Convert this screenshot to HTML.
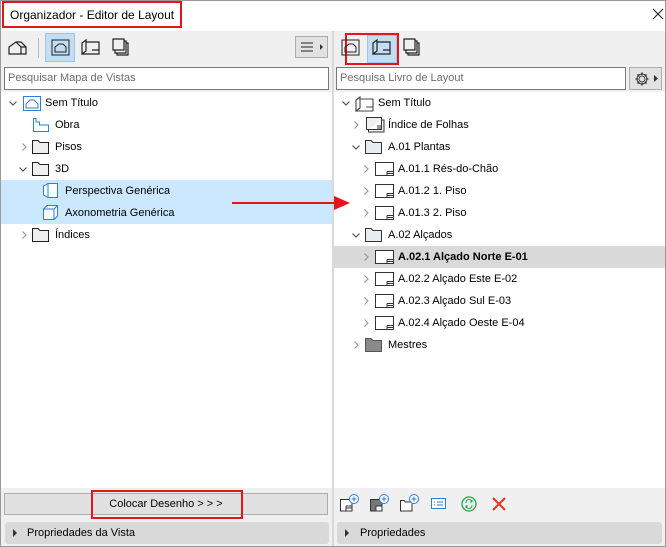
<!DOCTYPE html>
<html><head><meta charset="utf-8"><style>
*{box-sizing:border-box;margin:0;padding:0}
body{width:666px;height:547px;position:relative;overflow:hidden;background:#fff;font-family:"Liberation Sans",sans-serif;font-size:11px;color:#000}
.a{position:absolute}
.row{position:absolute;height:22px;line-height:22px;white-space:nowrap}
.gray{background:#f0f0f0}
svg{position:absolute;overflow:visible}
</style></head><body>
<div class="a" style="left:0;top:0;width:666px;height:547px;border:1px solid #9a9a9a"></div>
<div class="a" style="left:10px;top:8px;font-size:12px">Organizador - Editor de Layout</div>
<div class="a" style="left:2px;top:1px;width:180px;height:27px;border:2px solid #e8141c"></div>
<svg style="left:653px;top:9px" width="10" height="10"><path d="M0 0L10 10M10 0L0 10" stroke="#222" stroke-width="1.1"/></svg>

<!-- toolbars -->
<div class="a gray" style="left:1px;top:31px;width:331px;height:61px"></div>
<div class="a gray" style="left:334px;top:31px;width:331px;height:61px"></div>
<div class="a" style="left:332px;top:31px;width:2px;height:515px;background:#d8d8d8"></div>
<div class="a" style="left:45px;top:33px;width:30px;height:29px;background:#c3ddf2;border:1px solid #9ec6e8"></div>
<div class="a" style="left:38px;top:38px;width:1px;height:20px;background:#bbb"></div>
<svg style="left:8px;top:40px" width="20" height="16"><path d="M1 14V7L8 2H13L18 7V14H1ZM8 2L13 7V14M13 7H18" fill="none" stroke="#222" stroke-width="1.2"/></svg>
<svg style="left:51px;top:39px" width="20" height="18"><rect x="1" y="1" width="17" height="15" fill="none" stroke="#222"/><path d="M4 13V8L8 5H12L15 8V13Z" fill="none" stroke="#222"/></svg>
<svg style="left:81px;top:39px" width="20" height="18"><path d="M1 15V4L5 1V12ZM5 3H18V15H1M11 11H18" fill="none" stroke="#222" stroke-width="1.2"/></svg>
<svg style="left:112px;top:38px" width="18" height="18"><path d="M1 1H12V12H1ZM3 12V15H14V3H12M5 15V17H16V5H14" fill="none" stroke="#222" stroke-width="1.2"/></svg>
<div class="a" style="left:295px;top:36px;width:33px;height:22px;background:#e2e2e2;border:1px solid #adadad"></div>
<svg style="left:301px;top:42px" width="22" height="10"><path d="M0 1H12M0 5H12M0 9H12" stroke="#222"/><path d="M19 2L22 5L19 8Z" fill="#333"/></svg>

<div class="a" style="left:345px;top:33px;width:54px;height:32px;border:2px solid #e8141c"></div>
<div class="a" style="left:367px;top:35px;width:30px;height:28px;background:#c3ddf2;border:1px solid #9ec6e8"></div>
<svg style="left:341px;top:39px" width="20" height="18"><rect x="1" y="1" width="17" height="15" fill="none" stroke="#222"/><path d="M4 13V8L8 5H12L15 8V13Z" fill="none" stroke="#222"/></svg>
<svg style="left:372px;top:39px" width="20" height="18"><path d="M1 15V4L5 1V12ZM5 3H18V15H1M11 11H18" fill="none" stroke="#222" stroke-width="1.2"/></svg>
<svg style="left:403px;top:38px" width="18" height="18"><path d="M1 1H12V12H1ZM3 12V15H14V3H12M5 15V17H16V5H14" fill="none" stroke="#222" stroke-width="1.2"/></svg>

<!-- search -->
<div class="a" style="left:4px;top:67px;width:325px;height:23px;border:1px solid #7a7a7a;background:#fff;color:#6d6d6d;padding-left:3px;line-height:21px">Pesquisar Mapa de Vistas</div>
<div class="a" style="left:336px;top:67px;width:290px;height:23px;border:1px solid #7a7a7a;background:#fff;color:#6d6d6d;padding-left:3px;line-height:21px">Pesquisa Livro de Layout</div>
<div class="a" style="left:629px;top:67px;width:33px;height:23px;border:1px solid #adadad;background:#e2e2e2"></div>
<svg style="left:634px;top:71px" width="16" height="16"><circle cx="8" cy="8" r="3" fill="none" stroke="#444"/><path d="M8 1.5V4M8 12V14.5M1.5 8H4M12 8H14.5M3.4 3.4L5.2 5.2M10.8 10.8L12.6 12.6M3.4 12.6L5.2 10.8M10.8 5.2L12.6 3.4" stroke="#444" stroke-width="1.6"/><circle cx="8" cy="8" r="5" fill="none" stroke="#444"/></svg>
<svg style="left:654px;top:75px" width="4" height="7"><path d="M0 0L4 3.5L0 7Z" fill="#333"/></svg>

<!-- left tree -->
<div class="a" style="left:1px;top:180px;width:331px;height:44px;background:#cce8ff"></div>
<svg style="left:9px;top:101px" width="8" height="5"><path d="M.5 .5L4 4L7.5 .5" fill="none" stroke="#555" stroke-width="1.2"/></svg>
<svg style="left:23px;top:96px" width="18" height="15"><rect x="0.5" y="0.5" width="17" height="14" fill="none" stroke="#2a7de1"/><path d="M3 12V8L7 4H11L15 8V12Z" fill="none" stroke="#2a7de1"/></svg>
<div class="row" style="left:45px;top:92px">Sem Título</div>
<svg style="left:33px;top:118px" width="16" height="14"><path d="M.5 .5H3V4H6.5V7H15.5V13.5H.5Z" fill="#fff" stroke="#2a7de1"/></svg>
<div class="row" style="left:55px;top:114px">Obra</div>
<svg style="left:22px;top:143px" width="5" height="8"><path d="M.5 .5L4 4L.5 7.5" fill="none" stroke="#999" stroke-width="1.2"/></svg>
<svg style="left:32px;top:140px" width="17" height="14"><path d="M.5 13.5V.5H6L8 2.5H16.5V13.5Z" fill="#f0f0f0" stroke="#222"/></svg>
<div class="row" style="left:55px;top:136px">Pisos</div>
<svg style="left:19px;top:167px" width="8" height="5"><path d="M.5 .5L4 4L7.5 .5" fill="none" stroke="#555" stroke-width="1.2"/></svg>
<svg style="left:32px;top:162px" width="17" height="14"><path d="M.5 13.5V.5H6L8 2.5H16.5V13.5Z" fill="#f0f0f0" stroke="#222"/></svg>
<div class="row" style="left:55px;top:158px">3D</div>
<svg style="left:43px;top:183px" width="16" height="16"><path d="M.5 3L5 .5H14.5V14.5H5L.5 12ZM5 .5V14.5" fill="#fff" stroke="#2a7de1"/></svg>
<div class="row" style="left:65px;top:180px">Perspectiva Genérica</div>
<svg style="left:43px;top:205px" width="16" height="16"><path d="M.5 4L4 .5H14.5V11L11 14.5H.5ZM.5 4H11V14.5M11 4L14.5 .5" fill="#fff" stroke="#2a7de1"/></svg>
<div class="row" style="left:65px;top:202px">Axonometria Genérica</div>
<svg style="left:22px;top:231px" width="5" height="8"><path d="M.5 .5L4 4L.5 7.5" fill="none" stroke="#999" stroke-width="1.2"/></svg>
<svg style="left:32px;top:228px" width="17" height="14"><path d="M.5 13.5V.5H6L8 2.5H16.5V13.5Z" fill="#f0f0f0" stroke="#222"/></svg>
<div class="row" style="left:55px;top:224px">Índices</div>

<!-- arrow -->
<div class="a" style="left:232px;top:202px;width:106px;height:2px;background:#e8141c"></div>
<svg style="left:334px;top:196px" width="16" height="14"><path d="M0 0L16 7L0 14Z" fill="#e8141c"/></svg>

<!-- right tree -->
<div class="a" style="left:334px;top:246px;width:331px;height:22px;background:#d9d9d9"></div>
<svg style="left:342px;top:101px" width="8" height="5"><path d="M.5 .5L4 4L7.5 .5" fill="none" stroke="#555" stroke-width="1.2"/></svg>
<svg style="left:355px;top:96px" width="20" height="16"><path d="M1 15V4L5 1V12ZM5 3H18V15H1M11 11H18" fill="none" stroke="#444" stroke-width="1.1"/></svg>
<div class="row" style="left:378px;top:92px">Sem Título</div>
<svg style="left:354px;top:121px" width="5" height="8"><path d="M.5 .5L4 4L.5 7.5" fill="none" stroke="#999" stroke-width="1.2"/></svg>
<svg style="left:366px;top:117px" width="19" height="16"><path d="M.5 .5H15.5V12.5H.5ZM2.5 12.5V15H18V3H15.5M11 9H15.5M11 11H15.5" fill="#f0f0f0" stroke="#333"/></svg>
<div class="row" style="left:388px;top:114px">Índice de Folhas</div>
<svg style="left:352px;top:145px" width="8" height="5"><path d="M.5 .5L4 4L7.5 .5" fill="none" stroke="#555" stroke-width="1.2"/></svg>
<svg style="left:365px;top:140px" width="17" height="14"><path d="M.5 13.5V.5H6L8 2.5H16.5V13.5Z" fill="#e8edf3" stroke="#333"/></svg>
<div class="row" style="left:388px;top:136px">A.01 Plantas</div>
<svg style="left:364px;top:165px" width="5" height="8"><path d="M.5 .5L4 4L.5 7.5" fill="none" stroke="#999" stroke-width="1.2"/></svg>
<svg style="left:375px;top:162px" width="19" height="14"><path d="M.5 .5H18.5V13.5H.5ZM12 9.5H18.5M12 11.5H18.5M12 9.5V13.5" fill="#fff" stroke="#333"/></svg>
<div class="row" style="left:398px;top:158px">A.01.1 Rés-do-Chão</div>
<svg style="left:364px;top:187px" width="5" height="8"><path d="M.5 .5L4 4L.5 7.5" fill="none" stroke="#999" stroke-width="1.2"/></svg>
<svg style="left:375px;top:184px" width="19" height="14"><path d="M.5 .5H18.5V13.5H.5ZM12 9.5H18.5M12 11.5H18.5M12 9.5V13.5" fill="#fff" stroke="#333"/></svg>
<div class="row" style="left:398px;top:180px">A.01.2 1. Piso</div>
<svg style="left:364px;top:209px" width="5" height="8"><path d="M.5 .5L4 4L.5 7.5" fill="none" stroke="#999" stroke-width="1.2"/></svg>
<svg style="left:375px;top:206px" width="19" height="14"><path d="M.5 .5H18.5V13.5H.5ZM12 9.5H18.5M12 11.5H18.5M12 9.5V13.5" fill="#fff" stroke="#333"/></svg>
<div class="row" style="left:398px;top:202px">A.01.3 2. Piso</div>
<svg style="left:352px;top:233px" width="8" height="5"><path d="M.5 .5L4 4L7.5 .5" fill="none" stroke="#555" stroke-width="1.2"/></svg>
<svg style="left:365px;top:228px" width="17" height="14"><path d="M.5 13.5V.5H6L8 2.5H16.5V13.5Z" fill="#e8edf3" stroke="#333"/></svg>
<div class="row" style="left:388px;top:224px">A.02 Alçados</div>
<svg style="left:364px;top:253px" width="5" height="8"><path d="M.5 .5L4 4L.5 7.5" fill="none" stroke="#999" stroke-width="1.2"/></svg>
<svg style="left:375px;top:250px" width="19" height="14"><path d="M.5 .5H18.5V13.5H.5ZM12 9.5H18.5M12 11.5H18.5M12 9.5V13.5" fill="#fff" stroke="#333"/></svg>
<div class="row" style="left:398px;top:246px;font-weight:bold">A.02.1 Alçado Norte E-01</div>
<svg style="left:364px;top:275px" width="5" height="8"><path d="M.5 .5L4 4L.5 7.5" fill="none" stroke="#999" stroke-width="1.2"/></svg>
<svg style="left:375px;top:272px" width="19" height="14"><path d="M.5 .5H18.5V13.5H.5ZM12 9.5H18.5M12 11.5H18.5M12 9.5V13.5" fill="#fff" stroke="#333"/></svg>
<div class="row" style="left:398px;top:268px">A.02.2 Alçado Este E-02</div>
<svg style="left:364px;top:297px" width="5" height="8"><path d="M.5 .5L4 4L.5 7.5" fill="none" stroke="#999" stroke-width="1.2"/></svg>
<svg style="left:375px;top:294px" width="19" height="14"><path d="M.5 .5H18.5V13.5H.5ZM12 9.5H18.5M12 11.5H18.5M12 9.5V13.5" fill="#fff" stroke="#333"/></svg>
<div class="row" style="left:398px;top:290px">A.02.3 Alçado Sul E-03</div>
<svg style="left:364px;top:319px" width="5" height="8"><path d="M.5 .5L4 4L.5 7.5" fill="none" stroke="#999" stroke-width="1.2"/></svg>
<svg style="left:375px;top:316px" width="19" height="14"><path d="M.5 .5H18.5V13.5H.5ZM12 9.5H18.5M12 11.5H18.5M12 9.5V13.5" fill="#fff" stroke="#333"/></svg>
<div class="row" style="left:398px;top:312px">A.02.4 Alçado Oeste E-04</div>
<svg style="left:354px;top:341px" width="5" height="8"><path d="M.5 .5L4 4L.5 7.5" fill="none" stroke="#999" stroke-width="1.2"/></svg>
<svg style="left:365px;top:338px" width="17" height="14"><path d="M.5 13.5V.5H6L8 2.5H16.5V13.5Z" fill="#8a8a8a" stroke="#555"/></svg>
<div class="row" style="left:388px;top:334px">Mestres</div>

<!-- bottom -->
<div class="a gray" style="left:1px;top:488px;width:331px;height:58px"></div>
<div class="a gray" style="left:334px;top:488px;width:331px;height:58px"></div>
<div class="a" style="left:4px;top:493px;width:324px;height:22px;background:#e1e1e1;border:1px solid #adadad;text-align:center;line-height:20px">Colocar Desenho &gt; &gt; &gt;</div>
<div class="a" style="left:91px;top:490px;width:152px;height:29px;border:2px solid #e8141c"></div>
<div class="a" style="left:5px;top:522px;width:324px;height:22px;background:#d9d9d9;border-radius:3px;line-height:22px;padding-left:22px">Propriedades da Vista</div>
<svg style="left:13px;top:529px" width="4" height="8"><path d="M0 0L4 4L0 8Z" fill="#333"/></svg>
<div class="a" style="left:337px;top:522px;width:325px;height:22px;background:#d9d9d9;border-radius:3px;line-height:22px;padding-left:23px">Propriedades</div>
<svg style="left:345px;top:529px" width="4" height="8"><path d="M0 0L4 4L0 8Z" fill="#333"/></svg>

<svg style="left:340px;top:494px" width="20" height="18"><path d="M.5 5.5H12V17H.5ZM6 12H12M6 14H12M6 12V17" fill="#fff" stroke="#333"/><circle cx="14" cy="5" r="4.5" fill="#fff" stroke="#2a7de1"/><path d="M14 2.5V7.5M11.5 5H16.5" stroke="#2a7de1"/></svg>
<svg style="left:370px;top:494px" width="20" height="18"><path d="M.5 5.5H12V17H.5Z" fill="#777" stroke="#333"/><path d="M6 12H12V17H6Z" fill="#fff" stroke="#333"/><circle cx="14" cy="5" r="4.5" fill="#fff" stroke="#2a7de1"/><path d="M14 2.5V7.5M11.5 5H16.5" stroke="#2a7de1"/></svg>
<svg style="left:400px;top:494px" width="20" height="18"><path d="M.5 17V6.5H4L5.5 8H12V17Z" fill="#fff" stroke="#333"/><circle cx="14" cy="5" r="4.5" fill="#fff" stroke="#2a7de1"/><path d="M14 2.5V7.5M11.5 5H16.5" stroke="#2a7de1"/></svg>
<svg style="left:431px;top:498px" width="16" height="12"><rect x=".5" y=".5" width="14" height="10" fill="#fff" stroke="#2a7de1"/><path d="M3 4H4M6 4H12M3 7H4M6 7H12" stroke="#2a7de1"/></svg>
<svg style="left:461px;top:496px" width="16" height="16"><circle cx="8" cy="8" r="7" fill="none" stroke="#1fa34a" stroke-width="1.3"/><path d="M5 7A3 3 0 0 1 11 6M11 9A3 3 0 0 1 5 10M9 6H11V4M7 10H5V12" fill="none" stroke="#1fa34a"/></svg>
<svg style="left:492px;top:497px" width="14" height="14"><path d="M1 1L13 13M13 1L1 13" stroke="#e8321c" stroke-width="2"/></svg>
</body></html>
